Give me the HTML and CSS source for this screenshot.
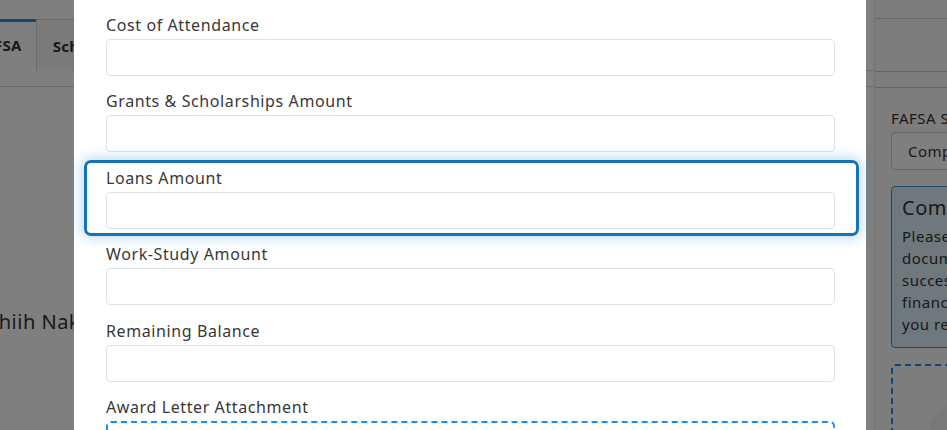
FILE: index.html
```html
<!DOCTYPE html>
<html>
<head>
<meta charset="utf-8">
<link rel="stylesheet" href="styles.css">
</head>
<body>
<div class="app">
  <div class="main">
    <div class="tabs">
      <div class="tab active">FAFSA</div>
      <div class="tab">Scholarships</div>
    </div>
    <div class="subbar"></div>
    <div class="main-body">
      <div class="name">Nhiih Nakai</div>
    </div>
  </div>
  <aside class="side">
    <div class="side-head"></div>
    <div class="side-sub"></div>
    <div class="side-body">
      <div class="side-label">FAFSA Status</div>
      <div class="side-select">Completed</div>
      <div class="alert">
        <div class="alert-title">Completed</div>
        <div class="alert-text">Please upload your<br>documents to<br>successfully complete<br>financial aid once<br>you receive it.</div>
      </div>
      <div class="drop"><span class="drop-circle"></span></div>
    </div>
  </aside>
</div>
<div class="backdrop"></div>
<div class="modal">
  <div class="field">
    <label class="label">Cost of Attendance</label>
    <input class="input" type="text">
  </div>
  <div class="field">
    <label class="label">Grants &amp; Scholarships Amount</label>
    <input class="input" type="text">
  </div>
  <div class="field focus">
    <label class="label">Loans Amount</label>
    <input class="input" type="text">
  </div>
  <div class="field">
    <label class="label">Work-Study Amount</label>
    <input class="input" type="text">
  </div>
  <div class="field">
    <label class="label">Remaining Balance</label>
    <input class="input" type="text">
  </div>
  <div class="field">
    <label class="label">Award Letter Attachment</label>
    <div class="upload"></div>
  </div>
</div>
</body>
</html>
```

FILE: styles.css
```css
* { box-sizing: border-box; }
html, body { margin: 0; height: 100%; overflow: hidden; }
body {
  background: #fff;
  font-family: "Noto Sans", "DejaVu Sans", sans-serif;
  color: #333;
  letter-spacing: 0.5px;
}
.app {
  display: grid;
  grid-template-columns: 873px 1fr;
  height: 430px;
}
.main { overflow: hidden; }
.tabs {
  margin-top: 19px;
  height: 52px;
  display: flex;
  margin-left: -49px;
  border-bottom: 1px solid #d6d6d6;
}
.tab {
  padding: 0 16px;
  height: 52px;
  display: flex;
  align-items: center;
  font-weight: 700;
  font-size: 15px;
  letter-spacing: 0.3px;
  color: #333;
  border: 1px solid #d6d6d6;
  border-bottom: none;
  background: #f6f6f6;
}
.tab.active {
  border-top: 3px solid #2a90d8;
  background: #fff;
  border-left: none;
  border-right: none;
  padding: 0 14px 3px 24px;
}
.subbar { height: 16px; border-bottom: 1px solid #d6d6d6; }
.main-body { padding-top: 221px; }
.name {
  font-size: 20px;
  margin-left: -17px;
  color: #333;
  white-space: nowrap;
}
.side {
  border-left: 1px solid #fff;
  background: #fafafa;
  overflow: hidden;
  box-shadow: inset 1px 0 0 #e8e8e8;
}
.side-head { margin-top: 18px; height: 54px; border-top: 1px solid #d2d2d2; border-bottom: 1px solid #d2d2d2; }
.side-sub { height: 16px; border-bottom: 1px solid #d2d2d2; }
.side-body { padding: 20px 0 0 17px; width: 300px; }
.side-label { font-size: 15px; line-height: 20px; margin-bottom: 4px; white-space: nowrap; }
.side-select {
  border: 1px solid #d0d0d0;
  border-radius: 4px;
  height: 38px;
  padding: 0 16px;
  display: flex;
  align-items: center;
  font-size: 15px;
  background: #fff;
}
.alert {
  margin-top: 16px;
  border: 1px solid #3591da;
  border-radius: 4px;
  background: #ddf1fb;
  padding: 8px 10px 10px;
  height: 162px;
  white-space: nowrap;
}
.alert-title { font-size: 20px; line-height: 26px; margin-bottom: 4px; }
.alert-text { font-size: 15px; line-height: 22px; }
.drop {
  margin-top: 16px;
  border: 2px dashed #1a8cf5;
  border-radius: 4px;
  height: 120px;
  padding: 38px 0 0 36px;
}
.drop-circle {
  display: block;
  width: 60px; height: 60px;
  border-radius: 50%;
  background: #f0f0f0;
}
.backdrop {
  position: fixed;
  inset: 0;
  background: rgba(0,0,0,0.5);
}
.modal {
  position: absolute;
  top: 0;
  left: 74px;
  width: 792px;
  height: 520px;
  background: #fff;
  padding: 14px 31px 0 32px;
}
.field {
  position: relative;
  margin-bottom: 14.4px;
}
.label {
  display: block;
  font-size: 16px;
  letter-spacing: 0.6px;
  line-height: 22px;
  margin-bottom: 3px;
  color: #383838;
}
.input {
  display: block;
  width: 729px;
  height: 37px;
  border: 1px solid #dbe3ea;
  border-radius: 4px;
  background: #fff;
  outline: none;
}
.field.focus::before {
  content: "";
  position: absolute;
  top: -7px; bottom: -7px;
  left: -22px; right: -24px;
  border: 3px solid #1673b5;
  border-radius: 7px;
  box-shadow: 0 0 12px 3px rgba(40,140,210,0.28);
  pointer-events: none;
}
.upload {
  width: 729px;
  height: 80px;
  border: 2px dashed #1a8cf0;
  border-radius: 5px;
}
```
